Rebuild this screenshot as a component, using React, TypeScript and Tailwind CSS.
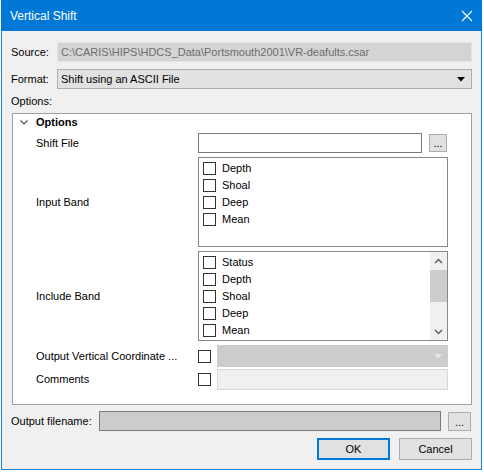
import type { ReactNode } from 'react'

const FONT = { fontFamily: '"Liberation Sans", Arial, sans-serif' }

function Check() {
  return <span className="block w-[13px] h-[13px] shrink-0 border border-[#333333] bg-white" />
}

function ListItem({ label }: { label: string }) {
  return (
    <div className="flex h-[17px] items-center pl-[4px]">
      <Check />
      <span className="ml-[6px] text-[11px] text-black">{label}</span>
    </div>
  )
}

function DotsButton({ className }: { className: string }) {
  return (
    <div className={`flex items-end justify-center pb-[3px] border border-[#adadad] bg-[#e1e1e1] ${className}`}>
      <span className="text-[11px] leading-[10px] text-black">...</span>
    </div>
  )
}

function Row({ label, children, className }: { label: string; children: ReactNode; className: string }) {
  return (
    <div className={`flex items-center ${className}`}>
      <span className="w-[162px] shrink-0 text-[11px] text-black">{label}</span>
      {children}
    </div>
  )
}

function ScrollArrow({ up }: { up?: boolean }) {
  return (
    <svg width="9" height="6" viewBox="0 0 9 6" className="block">
      <path d={up ? 'M1 5 L4.5 1.5 L8 5' : 'M1 1 L4.5 4.5 L8 1'} fill="none" stroke="#606060" strokeWidth="1.5" />
    </svg>
  )
}

export default function App() {
  return (
    <div className="w-[484px] h-[474px] bg-white pl-[1px]" style={FONT}>
      <div className="w-[481px] h-[470px] flex flex-col bg-[#f0f0f0] border-x border-b border-[#1883d7]">
        {/* Title bar */}
        <div className="h-[31px] -mx-[1px] flex items-center justify-between bg-[#0078d7] pl-[9px] pr-[9px]">
          <span className="text-[12px] text-white">Vertical Shift</span>
          <svg width="12" height="12" viewBox="0 0 12 12">
            <path d="M1 1 L11 11 M11 1 L1 11" stroke="white" strokeWidth="1.1" />
          </svg>
        </div>

        <div className="flex flex-col px-[9px]">
          {/* Source */}
          <div className="mt-[11px] flex h-[20px] items-center">
            <span className="w-[46px] shrink-0 text-[11px] text-black">Source:</span>
            <div className="flex-1 h-full flex items-center pl-[3px] border border-[#e3e3e3] bg-[#d4d4d4] text-[11px] text-[#6d6d6d]">
              C:\CARIS\HIPS\HDCS_Data\Portsmouth2001\VR-deafults.csar
            </div>
          </div>

          {/* Format */}
          <div className="mt-[7px] flex h-[20px] items-center">
            <span className="w-[46px] shrink-0 text-[11px] text-black">Format:</span>
            <div className="flex-1 h-full flex items-center justify-between pl-[3px] pr-[6px] border border-[#adadad] bg-[#e1e1e1] text-[11px] text-black">
              <span>Shift using an ASCII File</span>
              <svg width="8" height="5" viewBox="0 0 8 5">
                <path d="M0 0 H8 L4 4.5 Z" fill="black" />
              </svg>
            </div>
          </div>

          <div className="mt-[5px] h-[14px] leading-[14px] text-[11px] text-black">Options:</div>

          {/* Group box */}
          <div className="mt-[5px] ml-[1px] h-[292px] flex flex-col border border-[#a0a0a0] bg-white pl-[23px] pr-[22px]">
            <div className="h-[16px] flex items-center -ml-[16px]">
              <svg width="8" height="5" viewBox="0 0 8 5" className="block">
                <path d="M0.5 0.5 L4 4 L7.5 0.5" fill="none" stroke="#555555" strokeWidth="1.2" />
              </svg>
              <span className="ml-[8px] text-[11px] font-bold text-black">Options</span>
            </div>

            <Row label="Shift File" className="mt-[3px] h-[20px]">
              <div className="w-[224px] h-full border border-[#7a7a7a] bg-white" />
              <DotsButton className="ml-[7px] w-[18px] h-[18px]" />
            </Row>

            <Row label="Input Band" className="mt-[4px] h-[90px]">
              <div className="w-[250px] h-full border border-[#828790] bg-white pt-[2px]">
                {['Depth', 'Shoal', 'Deep', 'Mean'].map(b => <ListItem key={b} label={b} />)}
              </div>
            </Row>

            <Row label="Include Band" className="mt-[4px] h-[90px]">
              <div className="w-[250px] h-full flex border border-[#828790] bg-white">
                <div className="flex-1 pt-[2px] overflow-hidden">
                  {['Status', 'Depth', 'Shoal', 'Deep', 'Mean'].map(b => <ListItem key={b} label={b} />)}
                </div>
                <div className="w-[17px] flex flex-col bg-[#f0f0f0]">
                  <div className="h-[17px] flex items-center justify-center"><ScrollArrow up /></div>
                  <div className="h-[32px] mt-[1px] bg-[#cdcdcd]" />
                  <div className="flex-1" />
                  <div className="h-[17px] flex items-center justify-center"><ScrollArrow /></div>
                </div>
              </div>
            </Row>

            <Row label="Output Vertical Coordinate ..." className="mt-[4px] h-[22px]">
              <Check />
              <div className="ml-[6px] w-[231px] h-full flex items-center justify-end pr-[6px] bg-[#cccccc]">
                <svg width="8" height="5" viewBox="0 0 8 5">
                  <path d="M0 0 H8 L4 4.5 Z" fill="#e6e6e6" />
                </svg>
              </div>
            </Row>

            <Row label="Comments" className="mt-[2px] h-[21px]">
              <Check />
              <div className="ml-[6px] w-[231px] h-full border border-[#d9d9d9] bg-[#f0f0f0]" />
            </Row>
          </div>

          {/* Output filename */}
          <div className="mt-[6px] flex h-[20px] items-center">
            <span className="w-[88px] shrink-0 text-[11px] text-black">Output filename:</span>
            <div className="w-[342px] h-full border border-[#7a7a7a] bg-[#cccccc]" />
            <DotsButton className="ml-[7px] w-[23px] h-[19px]" />
          </div>

          {/* Buttons */}
          <div className="mt-[7px] flex justify-end gap-[9px]">
            <button className="w-[73px] h-[22px] border-2 border-[#0078d7] bg-[#e1e1e1] text-[11px] text-black">OK</button>
            <button className="w-[73px] h-[22px] border border-[#adadad] bg-[#e1e1e1] text-[11px] text-black">Cancel</button>
          </div>
        </div>
      </div>
    </div>
  )
}
